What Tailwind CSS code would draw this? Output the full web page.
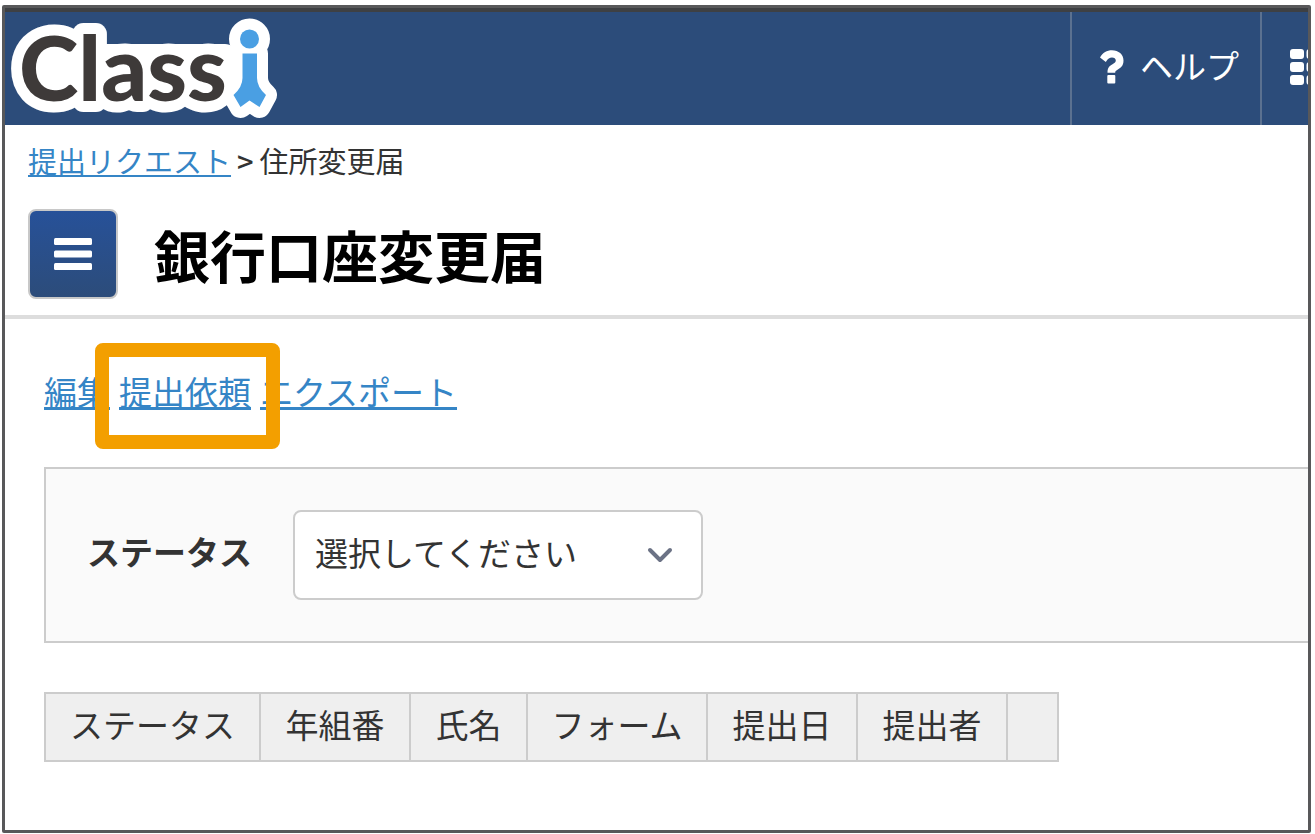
<!DOCTYPE html>
<html lang="ja">
<head>
<meta charset="utf-8">
<meta name="viewport" content="width=device-width, initial-scale=1">
<title>銀行口座変更届 | Classi</title>
<script src="https://cdn.jsdelivr.net/npm/@tailwindcss/browser@4"></script>
</head>
<body class="flex min-h-screen flex-col bg-white pt-[5px] pr-1 pb-px pl-0.5 font-['Noto_Sans_CJK_JP','Noto_Sans',sans-serif] text-[33px] leading-12 text-[#333]">
<div class="flex grow flex-col overflow-hidden rounded-xs border-3 border-[#58585a]">
  <header class="flex h-[117px] shrink-0 border-t-4 border-[#3e4043] bg-[#2c4c7a] text-white">
    <a href="#" aria-label="Classi" class="grow">
      <svg class="block h-[113px] w-[280px]" viewBox="5 12 280 113" aria-hidden="true">
        <defs>
          <g id="figure">
            <circle cx="249.500" cy="39" r="9.500"/>
            <path d="M242.500 53.500H257V78Q257 87 266 95L259.500 107L249.500 100.500L240.500 107L233.500 95Q242.500 87 242.500 78Z"/>
          </g>
        </defs>
        <g stroke="#fff" stroke-width="22" stroke-linejoin="round" fill="#fff">
          <text x="19" y="101" font-family="Lato" font-weight="900" font-size="90">Class</text>
          <path d="M50 55H225V90H50Z"/>
          <use href="#figure"/>
        </g>
        <text x="19" y="101" font-family="Lato" font-weight="900" font-size="90" fill="#3e3a39">Class</text>
        <use href="#figure" fill="#4a9fe3"/>
      </svg>
    </a>
    <button type="button" class="flex w-[190px] shrink-0 items-center gap-4 border-l-2 border-[#5b7190] pb-1 pl-7">
      <svg class="h-[34px] w-6" viewBox="0 0 24 34" fill="#fff" aria-hidden="true">
        <path d="M0 7.500C2.800 2.800 6.800.300 12 .300C18.500.300 23.500 4.500 23.500 10.500C23.500 16 20.500 18 17.500 19.700C15.800 20.700 15.200 21.300 15.200 22.800H7.500C7.500 18 9 16.200 12.500 14.300C14.800 13 15.800 12.200 15.800 10.600C15.800 8.800 14.200 7.600 12 7.600C9.500 7.600 8 8.800 5.800 12Z"/>
        <rect x="7.300" y="25" width="8" height="8.500" rx="1"/>
      </svg>
      <span class="pb-1">ヘルプ</span>
    </button>
    <button type="button" aria-label="メニュー" class="flex w-12 shrink-0 items-center overflow-hidden border-l-2 border-[#5b7190] pb-1 pl-7">
      <svg class="h-9 w-12 shrink-0" viewBox="0 0 48 36" fill="#fff" aria-hidden="true">
        <rect x="0" y="0" width="14" height="10" rx="3"/><rect x="16.500" y="0" width="14" height="10" rx="3"/><rect x="33" y="0" width="14" height="10" rx="3"/>
        <rect x="0" y="13" width="14" height="10" rx="3"/><rect x="16.500" y="13" width="14" height="10" rx="3"/><rect x="33" y="13" width="14" height="10" rx="3"/>
        <rect x="0" y="26" width="14" height="10" rx="3"/><rect x="16.500" y="26" width="14" height="10" rx="3"/><rect x="33" y="26" width="14" height="10" rx="3"/>
      </svg>
    </button>
  </header>

  <nav aria-label="パンくず" class="flex gap-1.5 px-[23px] pt-[11px] text-[29px]">
    <a href="#" class="text-[#3585c6] underline decoration-2 underline-offset-2">提出リクエスト</a>
    <span class="font-medium">&gt;</span>
    <span>住所変更届</span>
  </nav>

  <div class="flex items-center gap-9 border-b-4 border-[#ddd] px-[23px] pt-[25px] pb-4">
    <button type="button" aria-label="メニューを開く" class="flex size-[90px] items-center justify-center rounded-lg border-2 border-[#c8c8c8] bg-linear-to-b from-[#275199] to-[#2c4c7a]">
      <svg class="h-8 w-[38px]" viewBox="0 0 38 32" fill="#fff" aria-hidden="true">
        <rect width="38" height="7" rx="1.500"/><rect y="12.500" width="38" height="7" rx="1.500"/><rect y="25" width="38" height="7" rx="1.500"/>
      </svg>
    </button>
    <h1 class="text-[56px] leading-16 font-bold text-black">銀行口座変更届</h1>
  </div>

  <main class="pt-12 pl-[39px]">
    <div class="flex gap-[9px] text-[#3585c6] underline-offset-2">
      <a href="#" class="underline decoration-3">編集</a>
      <div class="relative">
        <a href="#" class="underline decoration-3">提出依頼</a>
        <!-- highlight frame -->
        <div class="pointer-events-none absolute -top-6 -left-6 h-[106px] w-[185px] rounded-lg border-14 border-[#f39f00]"></div>
      </div>
      <a href="#" class="underline decoration-3">エクスポート</a>
    </div>

    <form class="mt-[52px] flex items-center gap-[41px] border-2 border-r-0 border-[#ccc] bg-[#fafafa] px-[41px] py-[41px]">
      <label for="status" class="pb-2 font-bold">ステータス</label>
      <div class="relative w-[410px]">
        <select id="status" class="block h-[90px] w-full appearance-none rounded-lg border-2 border-[#ccc] bg-white pr-16 pb-1.5 pl-5">
          <option>選択してください</option>
        </select>
        <svg class="pointer-events-none absolute top-1/2 right-[30px] h-4 w-[26px] -translate-y-1/2" viewBox="0 0 26 16" fill="none" stroke="#6b7285" stroke-width="4" stroke-linecap="round" stroke-linejoin="round" aria-hidden="true"><path d="M3 3L13 13L23 3"/></svg>
      </div>
    </form>

    <table class="mt-[49px] table-fixed border-collapse">
      <thead>
        <tr class="h-[68px] bg-[#efefef] *:border-2 *:border-[#ccc] *:p-0 *:pb-1.5 *:font-normal">
          <th scope="col" class="w-[215px]">ステータス</th>
          <th scope="col" class="w-[150px]">年組番</th>
          <th scope="col" class="w-[117px]">氏名</th>
          <th scope="col" class="w-[180px]">フォーム</th>
          <th scope="col" class="w-[150px]">提出日</th>
          <th scope="col" class="w-[150px]">提出者</th>
          <td class="w-[51px]"></td>
        </tr>
      </thead>
    </table>
  </main>
</div>
</body>
</html>
